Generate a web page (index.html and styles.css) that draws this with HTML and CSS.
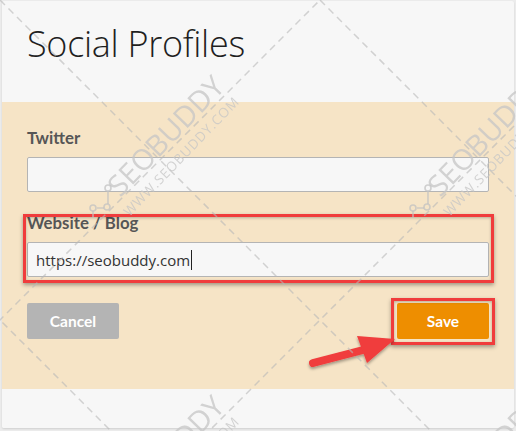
FILE: index.html
```html
<!DOCTYPE html>
<html lang="en">
<head>
<meta charset="utf-8">
<title>Social Profiles</title>
<link rel="stylesheet" href="styles.css">
</head>
<body>
<div class="page">
  <div class="card">
    <header class="card-head">
      <h1 class="title">Social Profiles</h1>
    </header>
    <section class="form">
      <div class="field">
        <label class="label">Twitter</label>
        <div class="input"></div>
      </div>
      <div class="field field-website">
        <label class="label">Website / Blog</label>
        <div class="input"><span class="value">https://seobuddy.com</span><span class="caret"></span></div>
        <div class="hl hl-field"></div>
      </div>
      <div class="actions">
        <button class="btn btn-cancel">Cancel</button>
        <div class="save-wrap">
          <button class="btn btn-save">Save</button>
          <div class="hl hl-save"></div>
          <svg class="arrow" width="100" height="40" viewBox="0 0 100 40">
            <g filter="url(#sh)">
              <line x1="8" y1="31" x2="62" y2="17" stroke="#f03c3c" stroke-width="8" stroke-linecap="round"/>
              <polygon points="52,4 90,7 62,31" fill="#f03c3c"/>
            </g>
            <defs>
              <filter id="sh" x="-20%" y="-40%" width="140%" height="180%">
                <feDropShadow dx="0" dy="2" stdDeviation="1.5" flood-color="#000" flood-opacity="0.35"/>
              </filter>
            </defs>
          </svg>
        </div>
      </div>
    </section>
    <footer class="card-foot"></footer>
  </div>
  <svg class="watermark" width="516" height="431" viewBox="0 0 516 431">
    <g class="wm-lines">
      <line x1="-320" y1="0" x2="431" y2="751"/>
      <line x1="0" y1="0" x2="600" y2="600"/>
      <line x1="320" y1="0" x2="920" y2="600"/>
      <line x1="-10" y1="330" x2="330" y2="-10"/>
      <line x1="0" y1="640" x2="640" y2="0"/>
      <line x1="300" y1="660" x2="960" y2="0"/>
    </g>
    <g class="wm">
      <g transform="translate(166,136)">
        <g transform="rotate(-46)">
          <text class="wm-big" x="0" y="10">SEOBUDDY</text>
          <text class="wm-small" x="-4" y="30">WWW.SEOBUDDY.COM</text>
        </g>
        <path class="wm-icon" d="M-58 55 V68 M-62 72 H-69 M-73 75 V82"/>
        <circle class="wm-icon" cx="-58" cy="52" r="3"/>
        <circle class="wm-icon" cx="-59" cy="71" r="3"/>
        <circle class="wm-icon" cx="-73" cy="72" r="3"/>
      </g>
      <g transform="translate(486,136)">
        <g transform="rotate(-46)">
          <text class="wm-big" x="0" y="10">SEOBUDDY</text>
          <text class="wm-small" x="-4" y="30">WWW.SEOBUDDY.COM</text>
        </g>
        <path class="wm-icon" d="M-58 55 V68 M-62 72 H-69 M-73 75 V82"/>
        <circle class="wm-icon" cx="-58" cy="52" r="3"/>
        <circle class="wm-icon" cx="-59" cy="71" r="3"/>
        <circle class="wm-icon" cx="-73" cy="72" r="3"/>
      </g>
      <g transform="translate(166,456)">
        <g transform="rotate(-46)">
          <text class="wm-big" x="0" y="10">SEOBUDDY</text>
          <text class="wm-small" x="-4" y="30">WWW.SEOBUDDY.COM</text>
        </g>
      </g>
      <g transform="translate(486,456)">
        <g transform="rotate(-46)">
          <text class="wm-big" x="0" y="10">SEOBUDDY</text>
          <text class="wm-small" x="-4" y="30">WWW.SEOBUDDY.COM</text>
        </g>
      </g>
    </g>
  </svg>
</div>
</body>
</html>
```

FILE: styles.css
```css
* { box-sizing: border-box; }
html, body { margin: 0; padding: 0; }
body {
  width: 516px;
  height: 431px;
  background: #ffffff;
  font-family: "Open Sans", "Liberation Sans", sans-serif;
  overflow: hidden;
}
.page {
  position: relative;
  width: 516px;
  height: 431px;
  padding: 1px 2px 3px 2px;
  background: #ececec;
}
.card {
  height: 427px;
  background: #f7f7f7;
  border-radius: 2px;
  display: flex;
  flex-direction: column;
  overflow: hidden;
  box-shadow: 0 1px 2px rgba(0,0,0,0.12);
}
.card-head {
  height: 101px;
  padding: 19px 25px 0 25px;
}
.title {
  margin: 0;
  font-family: "Open Sans", sans-serif;
  font-weight: 300;
  font-size: 36px;
  line-height: 48px;
  color: #1f1f1f;
  letter-spacing: -0.3px;
}
.form {
  height: 287px;
  background: #f6e4c6;
  padding: 26px 25px 0 25px;
  display: flex;
  flex-direction: column;
}
.field { position: relative; display: flex; flex-direction: column; }
.field-website { margin-top: 21px; }
.label {
  display: block;
  height: 20px;
  line-height: 20px;
  margin-bottom: 9px;
  font-family: "Lato", "Open Sans", sans-serif;
  font-weight: 700;
  font-size: 16.8px;
  color: #565656;
}
.input {
  height: 35px;
  background: #f7f7f7;
  border: 1px solid #b4b4b4;
  border-radius: 2px;
  display: flex;
  align-items: center;
  padding: 0 8px;
  font-family: "Open Sans", sans-serif;
  font-size: 15px;
  color: #333333;
}
.caret {
  display: inline-block;
  width: 1px;
  height: 20px;
  margin-left: 1px;
  background: #222;
}
.hl {
  position: absolute;
  border: 3px solid #f03c3c;
  box-shadow: 0 2px 4px rgba(0,0,0,0.35), inset 0 1px 3px rgba(0,0,0,0.25);
  pointer-events: none;
}
.hl-field { top: 1px; left: -4px; right: -5px; bottom: -6px; }
.actions {
  margin-top: 26px;
  display: flex;
  justify-content: space-between;
  align-items: flex-start;
}
.btn {
  width: 92px;
  height: 36px;
  border: none;
  border-radius: 2px;
  color: #ffffff;
  font-family: "Lato", "Open Sans", sans-serif;
  font-weight: 700;
  font-size: 15.5px;
  padding: 0;
}
.btn-cancel { background: #b4b4b4; }
.btn-save { background: #ee8e00; display: block; }
.save-wrap { position: relative; }
.hl-save { top: -5px; left: -6px; right: -6px; bottom: -6px; }
.arrow {
  position: absolute;
  left: -92px;
  top: 29px;
  overflow: visible;
}
.card-foot { flex: 1; background: #f7f7f7; }
.watermark {
  position: absolute;
  left: 0;
  top: 0;
  pointer-events: none;
}
.wm-lines line {
  stroke: #b8b8b8;
  stroke-width: 1.5;
  stroke-dasharray: 7 5;
  opacity: 0.6;
}
.wm-big {
  font-family: "Open Sans", sans-serif;
  font-size: 29px;
  fill: #c6c6c6;
  opacity: 0.75;
  text-anchor: middle;
}
.wm-small {
  font-family: "Open Sans", sans-serif;
  font-size: 13.5px;
  letter-spacing: 0.8px;
  fill: #c6c6c6;
  opacity: 0.75;
  text-anchor: middle;
}
.wm-icon {
  fill: none;
  stroke: #c2c2c2;
  stroke-width: 1.6;
  opacity: 0.75;
}
```
